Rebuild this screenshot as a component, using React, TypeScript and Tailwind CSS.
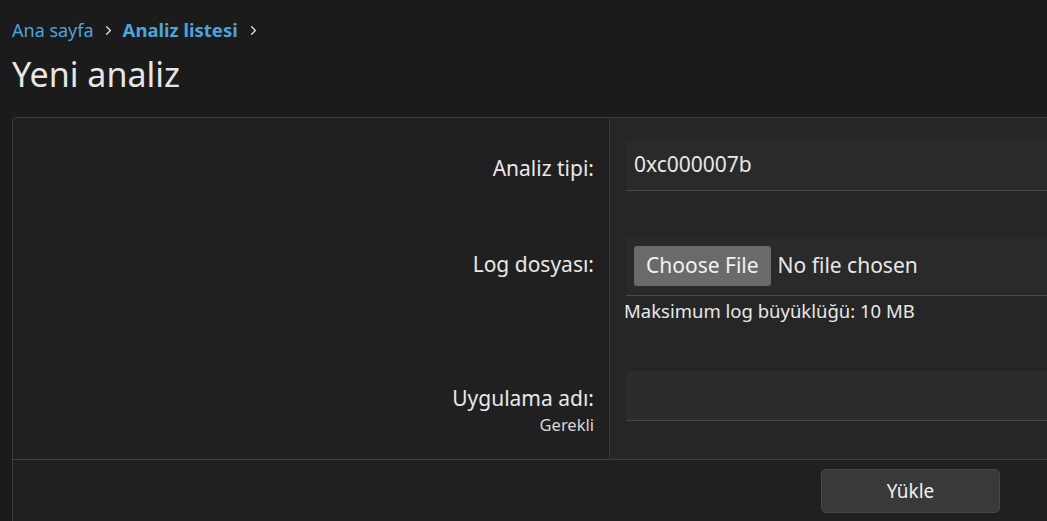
import { ChevronRight } from "lucide-react";

const App = () => {
    return (
        <div
            className="w-[1047px] h-[521px] overflow-hidden bg-[#1b1b1b] text-[#e8e8e8]"
            style={{ fontFamily: '"Noto Sans", "Open Sans", sans-serif' }}
        >
            <div className="pl-3 pt-[17px]">
                {/* breadcrumb */}
                <div className="flex items-center h-[26px] text-[18px] leading-none">
                    <span className="text-[#4da3dc]">Ana sayfa</span>
                    <ChevronRight size={15} strokeWidth={2} className="mx-[7px] text-[#e0e0e0]" />
                    <span className="text-[#4da3dc] font-bold text-[18.5px]">Analiz listesi</span>
                    <ChevronRight size={15} strokeWidth={2} className="mx-[8px] text-[#e0e0e0]" />
                </div>

                <h1 className="mt-[11px] text-[34px] leading-[40px] text-[#e6e6e6]">Yeni analiz</h1>

                {/* form card */}
                <div className="mt-[23px] w-[1200px] border border-[#3a3a3a] rounded-tl-[4px] bg-[#202020]">
                    <div className="flex">
                        <div className="w-[596px] shrink-0 pr-[15px] text-right text-[21px]">
                            <div className="h-[100px] pt-[35px]">Analiz tipi:</div>
                            <div className="h-[130px] pt-[31px]">Log dosyası:</div>
                            <div className="pt-[36px]">
                                <div className="leading-[28px]">Uygulama adı:</div>
                                <div className="text-[16.5px] leading-[26px] text-[#d8d8d8]">Gerekli</div>
                            </div>
                        </div>
                        <div className="flex-1 border-l border-[#3a3a3a] bg-[#262626] pl-[16px] pt-[22px] pb-[38px]">
                            <div className="h-[51px] flex items-center pl-[8px] bg-[#2a2a2a] border-b border-[#4a4a4a] rounded-t-[4px] text-[21px]">
                                0xc000007b
                            </div>
                            <div className="mt-[46px] h-[59px] flex items-center gap-[7px] pl-[8px] bg-[#2a2a2a] border-b border-[#4a4a4a] rounded-t-[4px] text-[21px]">
                                <button className="h-[40px] px-[12px] bg-[#6a6a6a] rounded-[3px] text-[#f2f2f2]">Choose File</button>
                                <span>No file chosen</span>
                            </div>
                            <div className="mt-[3px] -ml-[2px] text-[18.5px] leading-[24px]">Maksimum log büyüklüğü: 10 MB</div>
                            <div className="mt-[48px] h-[50px] bg-[#2c2c2c] border-b border-[#4a4a4a] rounded-t-[4px]"></div>
                        </div>
                    </div>
                    <div className="border-t border-[#3f3f3f] h-[70px] pt-[9px] pl-[808px]">
                        <button className="w-[179px] h-[44px] bg-[#393939] border border-[#474747] rounded-[5px] text-[19px] text-[#f0f0f0]">
                            Yükle
                        </button>
                    </div>
                </div>
            </div>
        </div>
    );
};

export default App;
